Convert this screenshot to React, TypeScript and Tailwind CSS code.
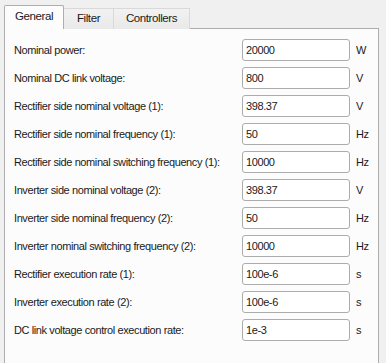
const rows: [string, string, string][] = [
  ["Nominal power:", "20000", "W"],
  ["Nominal DC link voltage:", "800", "V"],
  ["Rectifier side nominal voltage (1):", "398.37", "V"],
  ["Rectifier side nominal frequency (1):", "50", "Hz"],
  ["Rectifier side nominal switching frequency (1):", "10000", "Hz"],
  ["Inverter side nominal voltage (2):", "398.37", "V"],
  ["Inverter side nominal frequency (2):", "50", "Hz"],
  ["Inverter nominal switching frequency (2):", "10000", "Hz"],
  ["Rectifier execution rate (1):", "100e-6", "s"],
  ["Inverter execution rate (2):", "100e-6", "s"],
  ["DC link voltage control execution rate:", "1e-3", "s"],
];

export default function App() {
  return (
    <div className="w-[386px] h-[363px] overflow-hidden bg-[#f0f0f0] pl-[4px] pt-[5px] text-[11px] tracking-[-0.4px] text-[#1a1a1a] font-['Liberation_Sans',Arial,sans-serif]">
      {/* tabs */}
      <div className="flex items-end h-[24px] relative z-10 text-[11.5px]">
        <div className="w-[60px] h-[24px] bg-[#fcfcfc] border border-b-0 border-[#adadad] rounded-t-[2px] flex items-center justify-center pb-[1px]">
          General
        </div>
        <div className="w-[50px] h-[21px] border border-l-0 border-b-0 border-[#d9d9d9] bg-gradient-to-b from-[#f2f2f2] to-[#e9e9e9] flex items-center justify-center">
          Filter
        </div>
        <div className="w-[76px] h-[21px] border border-l-0 border-b-0 border-[#d9d9d9] bg-gradient-to-b from-[#f2f2f2] to-[#e9e9e9] flex items-center justify-center">
          Controllers
        </div>
      </div>
      {/* panel */}
      <div className="w-[375px] h-[360px] -mt-[1px] border border-[#adadad] bg-[#fcfcfc] pt-[10px] pl-[9px] flex flex-col gap-[6px]">
        {rows.map(([label, value, unit]) => (
          <div key={label} className="flex items-center h-[22px] whitespace-nowrap">
            <span className="w-[228px]">{label}</span>
            <div className="w-[108px] h-[22px] border border-[#acacac] rounded-[3px] bg-white flex items-center pl-[3px]">
              {value}
            </div>
            <span className="ml-[6px]">{unit}</span>
          </div>
        ))}
      </div>
    </div>
  );
}
